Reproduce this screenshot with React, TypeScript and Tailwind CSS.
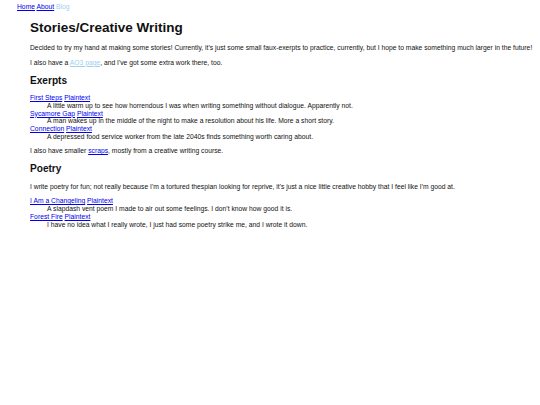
import React from 'react';

type Piece = {
  title: string;
  blurb: string;
};

const exerpts: Piece[] = [
  { title: 'First Steps', blurb: 'A little warm up to see how horrendous I was when writing something without dialogue. Apparently not.' },
  { title: 'Sycamore Gap', blurb: 'A man wakes up in the middle of the night to make a resolution about his life. More a short story.' },
  { title: 'Connection', blurb: 'A depressed food service worker from the late 2040s finds something worth caring about.' },
];

const poems: Piece[] = [
  { title: 'I Am a Changeling', blurb: "A slapdash vent poem I made to air out some feelings. I don't know how good it is." },
  { title: 'Forest Fire', blurb: 'I have no idea what I really wrote, I just had some poetry strike me, and I wrote it down.' },
];

// one dt/dd pair per piece, like the plain html list
const PieceList = ({ items }: { items: Piece[] }) => (
  <dl className="my-[6.75px]">
    {items.map((p) => (
      <React.Fragment key={p.title}>
        <dt>
          <a href="#" className="text-[#0000ee] underline">{p.title}</a>{' '}
          <a href="#" className="text-[#0000ee] underline">Plaintext</a>
        </dt>
        <dd className="ml-[17px]">{p.blurb}</dd>
      </React.Fragment>
    ))}
  </dl>
);

export default function App() {
  return (
    <div className="w-[540px] min-h-[405px] bg-white text-[#111] font-['Liberation_Sans',Arial,sans-serif] text-[6.75px] leading-[7.7px]">
      {/* Top nav */}
      <nav className="pl-[17px] pt-[3px]">
        <a href="#" className="text-[#0000ee] underline">Home</a>{' '}
        <a href="#" className="text-[#0000ee] underline">About</a>{' '}
        <a href="#" className="text-[#9ccfee]">Blog</a>
      </nav>

      <main className="pl-[30px] pr-[4px]">
        <h1 className="text-[13.5px] leading-[15.5px] font-bold mt-[9px] mb-[9px]">Stories/Creative Writing</h1>
        <p className="my-[6.75px]">
          Decided to try my hand at making some stories! Currently, it's just some small faux-exerpts to practice, currently, but I hope to make something much larger in the future!
        </p>
        <p className="my-[6.75px]">
          I also have a <a href="#" className="text-[#9ccfee] underline">AO3 page</a>, and I've got some extra work there, too.
        </p>

        <h2 className="text-[10.1px] leading-[11.6px] font-bold my-[8.2px]">Exerpts</h2>
        <PieceList items={exerpts} />
        <p className="my-[6.5px]">
          I also have smaller <a href="#" className="text-[#0000ee] underline">scraps</a>, mostly from a creative writing course.
        </p>

        <h2 className="text-[10.1px] leading-[11.6px] font-bold my-[8.2px]">Poetry</h2>
        <p className="my-[6.5px]">
          I write poetry for fun; not really because I'm a tortured thespian looking for reprive, it's just a nice little creative hobby that I feel like I'm good at.
        </p>
        <PieceList items={poems} />
      </main>
    </div>
  );
}
